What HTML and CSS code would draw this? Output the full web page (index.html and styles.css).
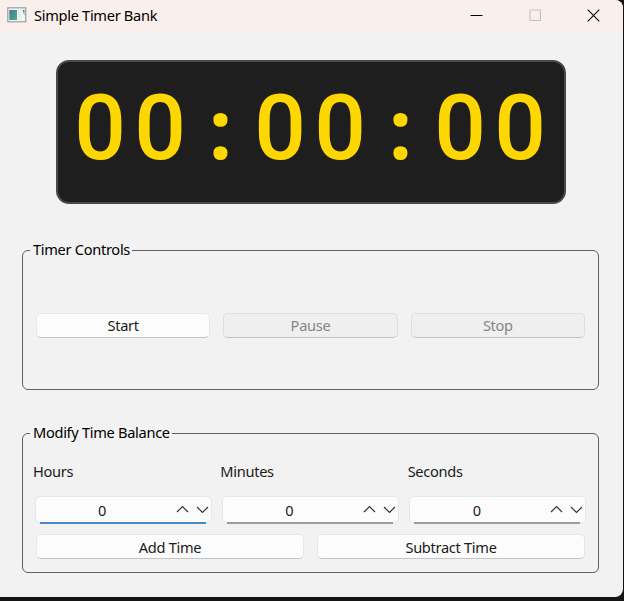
FILE: index.html
```html
<!DOCTYPE html>
<html lang="en">
<head>
<meta charset="utf-8">
<title>Simple Timer Bank</title>
<link rel="stylesheet" href="styles.css">
</head>
<body>
<div class="window">
  <header class="titlebar">
    <svg class="app-icon" width="20" height="16" viewBox="0 0 20 16">
      <defs><linearGradient id="pane" x1="0" y1="0" x2="1" y2="1"><stop offset="0" stop-color="#4479a3"/><stop offset="1" stop-color="#55ad77"/></linearGradient></defs>
      <rect x="0.8" y="0.8" width="18" height="14" fill="#f2f5f5" stroke="#9a9da5" stroke-width="1.2"/>
      <rect x="2.3" y="3" width="7.7" height="10" fill="url(#pane)"/>
      <rect x="11" y="3" width="3" height="10" fill="#e6ebeb"/>
      <path d="M15.5 3H17.5V9Z" fill="url(#pane)"/>
    </svg>
    <h1 class="title">Simple Timer Bank</h1>
    <div class="window-buttons">
      <svg width="13" height="13" viewBox="0 0 13 13"><path d="M0.5 6.5H12.5" stroke="#000"/></svg>
      <svg width="13" height="13" viewBox="0 0 13 13"><rect x="1" y="1" width="10.5" height="10.5" rx="0.8" fill="none" stroke="#c5bfbc" stroke-width="1.1"/></svg>
      <svg width="13" height="13" viewBox="0 0 13 13"><path d="M0.7 0.7L12.3 12.3M12.3 0.7L0.7 12.3" stroke="#111" stroke-width="1.2"/></svg>
    </div>
  </header>
  <main class="content">
    <div class="display"><span>0</span><span>0</span><span class="colon">:</span><span>0</span><span>0</span><span class="colon">:</span><span>0</span><span>0</span></div>

    <section class="group controls">
      <h2 class="group-title">Timer Controls</h2>
      <div class="row three">
        <button class="btn">Start</button>
        <button class="btn" disabled>Pause</button>
        <button class="btn" disabled>Stop</button>
      </div>
    </section>

    <section class="group balance">
      <h2 class="group-title">Modify Time Balance</h2>
      <div class="row three fields">
        <div class="field"><span class="label">Hours</span>
          <div class="spin active"><span class="value">0</span><svg width="34" height="9" viewBox="0 0 34 9"><path d="M1 7L6.5 1.5L12 7M21 2L26.5 7.5L32 2"/></svg></div></div>
        <div class="field"><span class="label">Minutes</span>
          <div class="spin"><span class="value">0</span><svg width="34" height="9" viewBox="0 0 34 9"><path d="M1 7L6.5 1.5L12 7M21 2L26.5 7.5L32 2"/></svg></div></div>
        <div class="field"><span class="label">Seconds</span>
          <div class="spin"><span class="value">0</span><svg width="34" height="9" viewBox="0 0 34 9"><path d="M1 7L6.5 1.5L12 7M21 2L26.5 7.5L32 2"/></svg></div></div>
      </div>
      <div class="row two">
        <button class="btn">Add Time</button>
        <button class="btn">Subtract Time</button>
      </div>
    </section>
  </main>
</div>
</body>
</html>
```
FILE: styles.css
```css
* { box-sizing: border-box; }
body {
  margin: 0;
  height: 601px;
  overflow: hidden;
  background: #141315;
  font: 14.6px/20px "Noto Sans", "Open Sans", sans-serif;
  letter-spacing: -0.3px;
  color: #1a1a1a;
}
.window {
  width: 623px;
  height: 597px;
  background: #f2f2f2;
  border-radius: 0 8px 8px 0;
  overflow: hidden;
}
.titlebar {
  display: flex;
  align-items: center;
  height: 33px;
  padding: 0 23px 3px 7px;
  background: #f9f0eb;
}
.title {
  margin: 0 0 0 7px;
  font-size: inherit;
  font-weight: 400;
  line-height: 20px;
  color: #000;
}
.window-buttons { display: flex; gap: 45.5px; margin-left: auto; }
.content { padding: 27px 23px 0 22px; }
.display {
  display: flex;
  align-items: baseline;
  justify-content: center;
  width: 510px;
  height: 144px;
  margin-left: 34px;
  padding-right: 2px;
  background: #1e1e1e;
  border: 2px solid #4a4a4a;
  border-radius: 13px;
  color: #ffd700;
  font: 500 91px/133px Roboto, sans-serif;
  letter-spacing: 0;
}
.display span { width: 60px; text-align: center; }
.display .colon { padding-left: 1px; font: 700 82px/100px "Open Sans", "Noto Sans", sans-serif; }
.group {
  position: relative;
  width: 577px;
  height: 140px;
  border: 1px solid #606060;
  border-radius: 6px;
}
.controls { margin-top: 46px; padding: 62px 13px 0; }
.balance { margin-top: 43px; padding: 27px 13px 0; }
.group-title {
  position: absolute;
  left: 7px;
  top: -12px;
  margin: 0;
  padding: 0 2px 0 3px;
  background: #f2f2f2;
  font-size: inherit;
  font-weight: 400;
  line-height: 20px;
  white-space: nowrap;
  color: #000;
}
.row { display: grid; column-gap: 13px; }
.three { grid-template-columns: repeat(3, 1fr); }
.two { grid-template-columns: repeat(2, 1fr); margin-top: 11px; }
.btn {
  height: 25px;
  padding: 0;
  border: 1px solid #e7e7e7;
  border-bottom-color: #c4c4c4;
  border-radius: 5px;
  background: #fcfcfc;
  font: inherit;
  letter-spacing: inherit;
  line-height: 23px;
  color: #1a1a1a;
}
.two .btn { padding-top: 1px; }
.btn:disabled { background: #efefef; border-color: #dedede; border-bottom-color: #c4c4c4; color: #858585; }
.label { display: block; margin-left: -3px; height: 35px; line-height: 20px; }
.spin {
  position: relative;
  display: flex;
  align-items: center;
  height: 27px;
  margin: 0 -1.5px;
  background: #fcfcfc;
  border: 1px solid #e7e7e7;
  border-radius: 5px;
}
.spin::after {
  content: "";
  position: absolute;
  left: 4px;
  right: 5px;
  bottom: -2px;
  height: 2px;
  background: #9b9b9b;
}
.spin.active::after { background: #4788c7; }
.value { width: 133px; text-align: center; }
.spin svg { margin-left: 7px; fill: none; stroke: #333; stroke-width: 1.2; }
```
